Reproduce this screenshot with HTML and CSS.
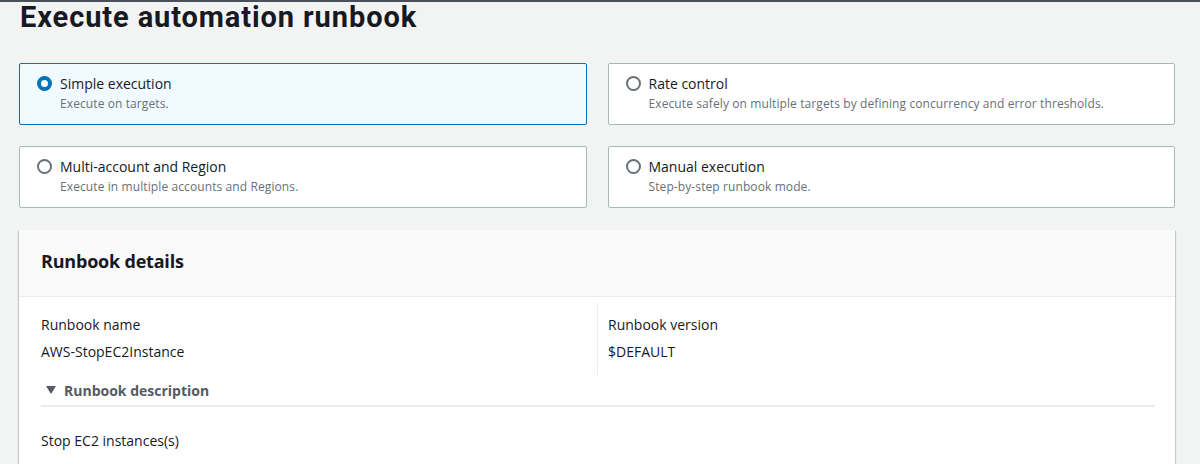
FILE: index.html
```html
<!DOCTYPE html>
<html>
<head>
<meta charset="utf-8">
<link rel="stylesheet" href="styles.css">
</head>
<body>
<div class="page">
  <h1 class="title">Execute automation runbook</h1>
  <div class="options">
    <div class="card selected">
      <span class="radio checked"></span>
      <div class="card-text">
        <div class="label">Simple execution</div>
        <div class="desc">Execute on targets.</div>
      </div>
    </div>
    <div class="card">
      <span class="radio"></span>
      <div class="card-text">
        <div class="label">Rate control</div>
        <div class="desc">Execute safely on multiple targets by defining concurrency and error thresholds.</div>
      </div>
    </div>
    <div class="card">
      <span class="radio"></span>
      <div class="card-text">
        <div class="label">Multi-account and Region</div>
        <div class="desc">Execute in multiple accounts and Regions.</div>
      </div>
    </div>
    <div class="card">
      <span class="radio"></span>
      <div class="card-text">
        <div class="label">Manual execution</div>
        <div class="desc">Step-by-step runbook mode.</div>
      </div>
    </div>
  </div>
  <div class="panel">
    <div class="panel-header">
      <h2>Runbook details</h2>
    </div>
    <div class="panel-body">
      <div class="cols">
        <div class="col">
          <div class="key">Runbook name</div>
          <div class="value">AWS-StopEC2Instance</div>
        </div>
        <div class="col col-divided">
          <div class="key">Runbook version</div>
          <div class="value">$DEFAULT</div>
        </div>
      </div>
      <div class="expander">
        <span class="caret"></span>
        <span>Runbook description</span>
      </div>
      <div class="desc-text">Stop EC2 instances(s)</div>
    </div>
  </div>
</div>
</body>
</html>
```

FILE: styles.css
```css
* { box-sizing: border-box; }
html, body {
  margin: 0;
  padding: 0;
}
body {
  background: #f2f3f3;
  font-family: "Open Sans", "Noto Sans", Arial, sans-serif;
  color: #16191f;
  height: 464px;
  overflow: hidden;
}
.page {
  border-top: 2px solid #4a5059;
  padding: 0 25px 0 19px;
  height: 464px;
  overflow: hidden;
}
.title {
  margin: 0 0 0 1px;
  font-family: Roboto, "Open Sans", Arial, sans-serif;
  font-size: 29px;
  font-weight: 700;
  line-height: 30px;
  letter-spacing: 0.9px;
  padding-top: 0;
  height: 61px;
}
.options {
  display: grid;
  grid-template-columns: 1fr 1fr;
  column-gap: 21px;
  row-gap: 21px;
}
.card {
  display: flex;
  align-items: flex-start;
  height: 62px;
  border: 1px solid #aab7b8;
  border-radius: 2px;
  background: #fff;
  padding: 10px 16px 0 17px;
}
.card.selected {
  border-color: #0073bb;
  background: #f1faff;
}
.radio {
  width: 15px;
  height: 15px;
  border: 2px solid #687078;
  border-radius: 50%;
  flex: none;
  margin-top: 2px;
  margin-right: 8px;
  background: #fff;
}
.radio.checked {
  border: 4.5px solid #0073bb;
}
.label {
  font-size: 14px;
  line-height: 20px;
}
.desc {
  font-size: 12px;
  line-height: 20px;
  color: #687078;
  letter-spacing: 0.1px;
}
.panel {
  margin-top: 22px;
  background: #fff;
  height: 240px;
  box-shadow: 0 1px 1px 0 rgba(0,28,36,0.3), 1px 1px 1px 0 rgba(0,28,36,0.15), -1px 1px 1px 0 rgba(0,28,36,0.15);
}
.panel-header {
  background: #fafafa;
  height: 67px;
  border-bottom: 1px solid #eaeded;
  padding: 19px 22px 0;
}
.panel-header h2 {
  margin: 0;
  font-size: 18px;
  font-weight: 700;
  line-height: 24px;
  letter-spacing: -0.2px;
}
.panel-body {
  padding: 6px 20px 0 22px;
}
.cols {
  display: flex;
}
.col {
  width: 556px;
  padding-top: 12px;
  height: 72px;
}
.col-divided {
  border-left: 1px solid #eaeded;
  padding-left: 10px;
  flex: 1;
}
.key, .value {
  font-size: 14px;
  line-height: 20px;
}
.key { margin-bottom: 7px; }
.expander {
  display: flex;
  align-items: center;
  height: 30px;
  margin-top: 2px;
  border-bottom: 2px solid #eaeded;
  font-size: 14px;
  font-weight: 700;
  color: #545b64;
  padding-left: 5px;
  padding-bottom: 2px;
}
.caret {
  width: 0;
  height: 0;
  border-left: 5px solid transparent;
  border-right: 5px solid transparent;
  border-top: 8px solid #545b64;
  margin-right: 8px;
}
.desc-text {
  font-size: 14px;
  line-height: 20px;
  padding-top: 24px;
}
```
